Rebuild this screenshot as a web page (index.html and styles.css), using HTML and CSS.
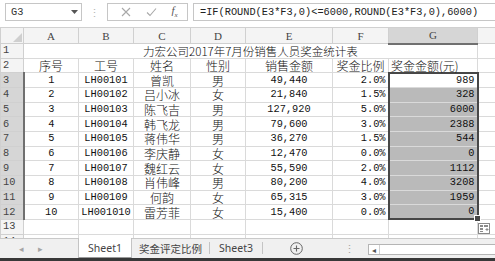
FILE: index.html
```html
<!DOCTYPE html>
<html lang="zh-CN">
<head>
    <meta charset="UTF-8">
    <title>奖金统计表</title>
    <link rel="stylesheet" href="styles.css">
</head>
<body>
    <div class="formula-bar">
        <div class="name-box">
            <span>G3</span>
            <svg class="drop" width="7" height="4" viewBox="0 0 7 4"><path d="M0 0h7L3.5 4z" fill="#555"/></svg>
        </div>
        <div class="sep-dots">⋮</div>
        <div class="fx-buttons">
            <svg width="10" height="10" viewBox="0 0 10 10"><path d="M1 1l8 8M9 1l-8 8" stroke="#a8a8a8" stroke-width="1.1"/></svg>
            <svg width="11" height="10" viewBox="0 0 11 10"><path d="M1 5.5l3 3L10 1.5" stroke="#a8a8a8" stroke-width="1.1" fill="none"/></svg>
            <span class="fx"><i>f</i><sub>x</sub></span>
        </div>
        <div class="formula-input">=IF(ROUND(E3*F3,0)&lt;=6000,ROUND(E3*F3,0),6000)</div>
    </div>

    <div class="grid-wrap">
        <table class="grid">
            <colgroup>
                <col style="width:23px"><col style="width:55px"><col style="width:55px"><col style="width:57px">
                <col style="width:55px"><col style="width:87px"><col style="width:56px"><col style="width:89px"><col style="width:18px">
            </colgroup>
            <tr class="head-row">
                <th class="corner"><svg width="9" height="9" viewBox="0 0 9 9"><path d="M9 0v9H0z" fill="#cfcfcf"/></svg></th>
                <th>A</th><th>B</th><th>C</th><th>D</th><th>E</th><th>F</th><th class="col-sel">G</th><th></th>
            </tr>
            <tr>
                <th class="row-head">1</th>
                <td colspan="7" class="title">力宏公司2017年7月份销售人员奖金统计表</td>
                <td></td>
            </tr>
            <tr>
                <th class="row-head">2</th>
                <td class="c">序号</td><td class="c">工号</td><td class="c">姓名</td><td class="c">性别</td>
                <td class="c">销售金额</td><td class="c">奖金比例</td><td class="c left">奖金金额(元)</td><td></td>
            </tr>
            <tr>
                <th class="row-head on">3</th>
                <td class="n c">1</td><td class="n c">LH00101</td><td class="c">曾凯</td><td class="c">男</td>
                <td class="n c">49,440</td><td class="n r">2.0%</td><td class="n r sel sel-top">989</td><td></td>
            </tr>
            <tr>
                <th class="row-head on">4</th>
                <td class="n c">2</td><td class="n c">LH00102</td><td class="c">吕小冰</td><td class="c">女</td>
                <td class="n c">21,840</td><td class="n r">1.5%</td><td class="n r sel shade">328</td><td></td>
            </tr>
            <tr>
                <th class="row-head on">5</th>
                <td class="n c">3</td><td class="n c">LH00103</td><td class="c">陈飞吉</td><td class="c">男</td>
                <td class="n c">127,920</td><td class="n r">5.0%</td><td class="n r sel shade">6000</td><td></td>
            </tr>
            <tr>
                <th class="row-head on">6</th>
                <td class="n c">4</td><td class="n c">LH00104</td><td class="c">韩飞龙</td><td class="c">男</td>
                <td class="n c">79,600</td><td class="n r">3.0%</td><td class="n r sel shade">2388</td><td></td>
            </tr>
            <tr>
                <th class="row-head on">7</th>
                <td class="n c">5</td><td class="n c">LH00105</td><td class="c">蒋伟华</td><td class="c">男</td>
                <td class="n c">36,270</td><td class="n r">1.5%</td><td class="n r sel shade">544</td><td></td>
            </tr>
            <tr>
                <th class="row-head on">8</th>
                <td class="n c">6</td><td class="n c">LH00106</td><td class="c">李庆静</td><td class="c">女</td>
                <td class="n c">12,470</td><td class="n r">0.0%</td><td class="n r sel shade">0</td><td></td>
            </tr>
            <tr>
                <th class="row-head on">9</th>
                <td class="n c">7</td><td class="n c">LH00107</td><td class="c">魏红云</td><td class="c">女</td>
                <td class="n c">55,590</td><td class="n r">2.0%</td><td class="n r sel shade">1112</td><td></td>
            </tr>
            <tr>
                <th class="row-head on">10</th>
                <td class="n c">8</td><td class="n c">LH00108</td><td class="c">肖伟峰</td><td class="c">男</td>
                <td class="n c">80,200</td><td class="n r">4.0%</td><td class="n r sel shade">3208</td><td></td>
            </tr>
            <tr>
                <th class="row-head on">11</th>
                <td class="n c">9</td><td class="n c">LH00109</td><td class="c">何韵</td><td class="c">女</td>
                <td class="n c">65,315</td><td class="n r">3.0%</td><td class="n r sel shade">1959</td><td></td>
            </tr>
            <tr>
                <th class="row-head on">12</th>
                <td class="n c">10</td><td class="n c">LH001010</td><td class="c">雷芳菲</td><td class="c">女</td>
                <td class="n c">15,400</td><td class="n r">0.0%</td><td class="n r sel shade sel-end">0</td><td></td>
            </tr>
            <tr>
                <th class="row-head">13</th>
                <td></td><td></td><td></td><td></td><td></td><td></td><td></td>
                <td class="qa">
                    <svg width="12" height="11" viewBox="0 0 12 11">
                        <rect x="0.5" y="0.5" width="11" height="10" fill="#fff" stroke="#8a8a8a"/>
                        <rect x="2" y="2" width="3" height="2" fill="#8a8a8a"/>
                        <rect x="6" y="2" width="4" height="2" fill="#8a8a8a"/>
                        <rect x="2" y="5" width="3" height="2" fill="#8a8a8a"/>
                        <rect x="2" y="8" width="3" height="1" fill="#8a8a8a"/>
                        <path d="M7.5 6.5h3M9 5v3" stroke="#8a8a8a"/>
                    </svg>
                </td>
            </tr>
            <tr>
                <th class="row-head">14</th>
                <td></td><td></td><td></td><td></td><td></td><td></td><td></td><td></td>
            </tr>
        </table>
    </div>

    <div class="tab-bar">
        <div class="tab-nav">
            <span>◂</span>
            <span>▸</span>
        </div>
        <div class="tab active">Sheet1</div>
        <div class="tab wide">奖金评定比例</div>
        <div class="tab">Sheet3</div>
        <div class="add-sheet">
            <svg width="13" height="13" viewBox="0 0 13 13"><circle cx="6.5" cy="6.5" r="5.8" fill="none" stroke="#666"/><path d="M6.5 3.5v6M3.5 6.5h6" stroke="#666" stroke-width="1.1"/></svg>
        </div>
        <div class="tab-dots">⋮</div>
        <div class="hscroll">
            <span class="hscroll-btn">◂</span>
        </div>
    </div>
</body>
</html>
```

FILE: styles.css
```css
body {
    margin: 0;
    width: 495px;
    height: 261px;
    overflow: hidden;
    background: #fff;
    color: #111;
    font-family: "Noto Sans CJK SC", sans-serif;
}

/* formula bar */
.formula-bar {
    height: 23px;
    display: flex;
    align-items: center;
    padding-top: 1px;
    box-sizing: border-box;
}
.name-box {
    margin-left: 5px;
    width: 77px;
    height: 18px;
    box-sizing: border-box;
    border: 1px solid #c6c6c6;
    display: flex;
    align-items: center;
    justify-content: space-between;
    padding: 0 3px 0 5px;
    font: 10.3px "Liberation Mono", monospace;
    color: #333;
}
.sep-dots {
    width: 25px;
    text-align: center;
    color: #b5b5b5;
    font-size: 11px;
}
.fx-buttons {
    width: 81px;
    height: 18px;
    box-sizing: border-box;
    border: 1px solid #c6c6c6;
    display: flex;
    align-items: center;
    justify-content: space-around;
    padding: 0 2px 0 6px;
}
.fx {
    font-family: "Liberation Serif", serif;
    font-size: 11px;
    color: #555;
}
.fx sub {
    font-size: 7px;
    font-style: italic;
}
.formula-input {
    flex: 1;
    height: 18px;
    margin-left: 5px;
    box-sizing: border-box;
    border: 1px solid #c6c6c6;
    border-right: none;
    padding-left: 6px;
    font: 10.3px/16px "Liberation Mono", monospace;
    color: #222;
    white-space: nowrap;
    overflow: hidden;
}

/* sheet grid */
.grid-wrap {
    margin-top: 4px;
    height: 211px;
    overflow: hidden;
}
.grid {
    border-collapse: collapse;
    table-layout: fixed;
    width: 495px;
}
.grid tr {
    height: 14.67px;
}
.grid .head-row {
    height: 16px;
}
.grid td, .grid th {
    border: 1px solid #dadada;
    padding: 0 2px;
    white-space: nowrap;
    font-weight: 300;
    font-size: 12px;
    line-height: 13px;
}
.head-row th {
    background: #f4f4f4;
    border-color: #d0d0d0;
    color: #444;
    font: 11px/14px "Liberation Serif", serif;
}
.head-row .corner {
    text-align: right;
    vertical-align: bottom;
    padding: 0 1px 1px 0;
    line-height: 0;
}
.head-row .col-sel {
    background: #d6d6d6;
    border-bottom: 2px solid #707070;
}
.row-head {
    background: #f4f4f4;
    border-color: #d0d0d0 !important;
    color: #444;
    text-align: left;
    font: 10.3px/13px "Liberation Mono", monospace !important;
}
.row-head.on {
    background: #d6d6d6;
    border-right: 2px solid #707070 !important;
}
.title {
    text-align: center;
    font-size: 11.5px !important;
}
.c {
    text-align: center;
}
.r {
    text-align: right;
}
.left {
    text-align: left;
}
.n {
    font: 10.3px/13px "Liberation Mono", monospace !important;
}
.sel {
    border-left: 2px solid #474747 !important;
    border-right: 2px solid #474747 !important;
}
.sel-top {
    border-top: 2px solid #474747 !important;
}
.sel-end {
    border-bottom: 2px solid #474747 !important;
    position: relative;
}
.sel-end::after {
    content: "";
    position: absolute;
    right: -4px;
    bottom: -4px;
    width: 5px;
    height: 5px;
    background: #474747;
    border: 1px solid #fff;
}
.shade {
    background: #bababa;
}
.qa {
    padding: 0 !important;
    vertical-align: bottom;
    line-height: 0 !important;
}

/* sheet tabs */
.tab-bar {
    height: 23px;
    box-sizing: border-box;
    background: #f0f0f0;
    border-top: 1px solid #c9c9c9;
    border-bottom: 3px solid #383838;
    display: flex;
    align-items: stretch;
    font: 10.5px "Noto Sans", sans-serif;
    color: #444;
}
.tab-nav {
    width: 78px;
    display: flex;
    align-items: center;
    gap: 14px;
    padding-left: 19px;
    box-sizing: border-box;
    color: #a5a5a5;
    font-size: 9px;
}
.tab {
    width: 52px;
    display: flex;
    align-items: center;
    justify-content: center;
    border-right: 1px solid #c4c4c4;
    margin: 3px 0 4px;
}
.tab.active {
    width: 54px;
    margin: -1px 0 0;
    background: #fff;
    border-left: 1px solid #c4c4c4;
    border-bottom: 1px solid #9a9a9a;
    box-sizing: border-box;
}
.tab.wide {
    width: 77px;
    font-family: "Noto Sans CJK SC", sans-serif;
}
.add-sheet {
    width: 67px;
    display: flex;
    align-items: center;
    justify-content: center;
}
.tab-dots {
    width: 38px;
    display: flex;
    align-items: center;
    justify-content: center;
    color: #a5a5a5;
}
.hscroll {
    flex: 1;
    margin: 5px 0 3px;
    background: #fff;
    border: 1px solid #b5b5b5;
    border-right: none;
    display: flex;
    align-items: center;
}
.hscroll-btn {
    width: 10px;
    height: 100%;
    border-right: 1px solid #d0d0d0;
    font-size: 8px;
    color: #555;
    display: flex;
    align-items: center;
    justify-content: center;
}
```
